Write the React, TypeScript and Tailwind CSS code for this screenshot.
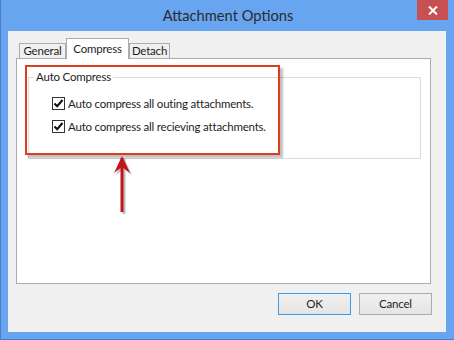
function CheckRow({ label }: { label: string }) {
  return (
    <div className="flex items-center gap-[3px] h-[13px]">
      <span className="w-[13px] h-[13px] border border-[#333333] bg-white flex items-center justify-center">
        <svg width="11" height="11" viewBox="0 0 11 11">
          <path d="M1.5 5.5 L4.2 8.3 L9.5 2" fill="none" stroke="#111" strokeWidth="2.1" />
        </svg>
      </span>
      <span>{label}</span>
    </div>
  )
}

function Tab({ label, w, active }: { label: string; w: string; active?: boolean }) {
  if (active) {
    return (
      <div className={`relative z-10 h-[21px] -mb-px flex justify-center bg-white border border-b-0 border-[#acacac] ${w}`}>
        <span className="mt-[1px]">{label}</span>
      </div>
    )
  }
  return (
    <div className={`h-[15px] flex items-center justify-center bg-[#f0f0f0] border border-b-0 border-[#acacac] ${w}`}>
      <span>{label}</span>
    </div>
  )
}

export default function App() {
  return (
    <div
      className="w-[454px] h-[340px] bg-[#68a5f1] border-l border-b border-[#4a7fc7] flex flex-col text-[11.5px] tracking-[-0.2px] text-[#1e1e1e] relative"
      style={{ fontFamily: 'Lato, "Open Sans", sans-serif' }}
    >
      {/* title bar */}
      <div className="h-[31px] relative flex items-center justify-center">
        <span className="text-[14.7px] tracking-normal text-[#2b2b2b] -mt-[1px] ml-[1px]">Attachment Options</span>
        <div className="absolute right-[6px] top-0 w-[31px] h-[20px] bg-[#c75050] flex items-center justify-center">
          <svg width="10" height="9" viewBox="0 0 10 9">
            <path d="M1 0.5 L9 8.5 M9 0.5 L1 8.5" stroke="#fff" strokeWidth="2" />
          </svg>
        </div>
      </div>

      {/* client */}
      <div className="ml-[7px] mr-[8px] h-[301px] bg-[#f0f0f0] pt-[7px] pl-[8px] pr-[14px] flex flex-col">
        <div className="flex items-end pl-[3px] h-[20px]">
          <Tab label="General" w="w-[47px]" />
          <Tab label="Compress" w="w-[63px]" active />
          <Tab label="Detach" w="w-[41px]" />
        </div>
        <div className="h-[226px] w-[415px] bg-white border border-[#acacac] pt-[12px] pl-[11px] pr-[9px]">
          <div className="relative h-[82px] border border-[#dcdcdc] mt-[6px]">
            <span className="absolute -top-[9px] left-[5px] bg-white px-[2px] leading-[16px]">Auto Compress</span>
            <div className="pt-[19px] pl-[23px] flex flex-col gap-[10px]">
              <CheckRow label="Auto compress all outing attachments." />
              <CheckRow label="Auto compress all recieving attachments." />
            </div>
          </div>
        </div>
        <div className="flex justify-end gap-[8px] mt-[9px] pr-[0px]">
          <button className="w-[73px] h-[22px] border border-[#3c9be8] bg-gradient-to-b from-[#f0f0f0] to-[#e5e5e5] text-[#1e1e1e]">
            OK
          </button>
          <button className="w-[73px] h-[22px] border border-[#acacac] bg-gradient-to-b from-[#f0f0f0] to-[#e5e5e5] text-[#1e1e1e]">
            Cancel
          </button>
        </div>
      </div>

      {/* annotation: red box */}
      <div className="absolute left-[24px] top-[65px] w-[255px] h-[90px] border-2 border-[#de3c1e] shadow-[3px_3px_2px_rgba(0,0,0,0.25)]" />

      {/* annotation: arrow */}
      <svg className="absolute left-[108px] top-[152px]" width="28" height="64" viewBox="0 0 28 64">
        <g transform="translate(2 2)" opacity="0.25">
          <path d="M13 5 L13 60" stroke="#000" strokeWidth="3" />
          <path d="M13 4 L5 21 L13 15 L21 21 Z" fill="#000" />
        </g>
        <path d="M13 6 L13 60" stroke="#c4141a" strokeWidth="3" />
        <path d="M13 4 L5 21 L13 15 L21 21 Z" fill="#c4141a" />
      </svg>
    </div>
  )
}
